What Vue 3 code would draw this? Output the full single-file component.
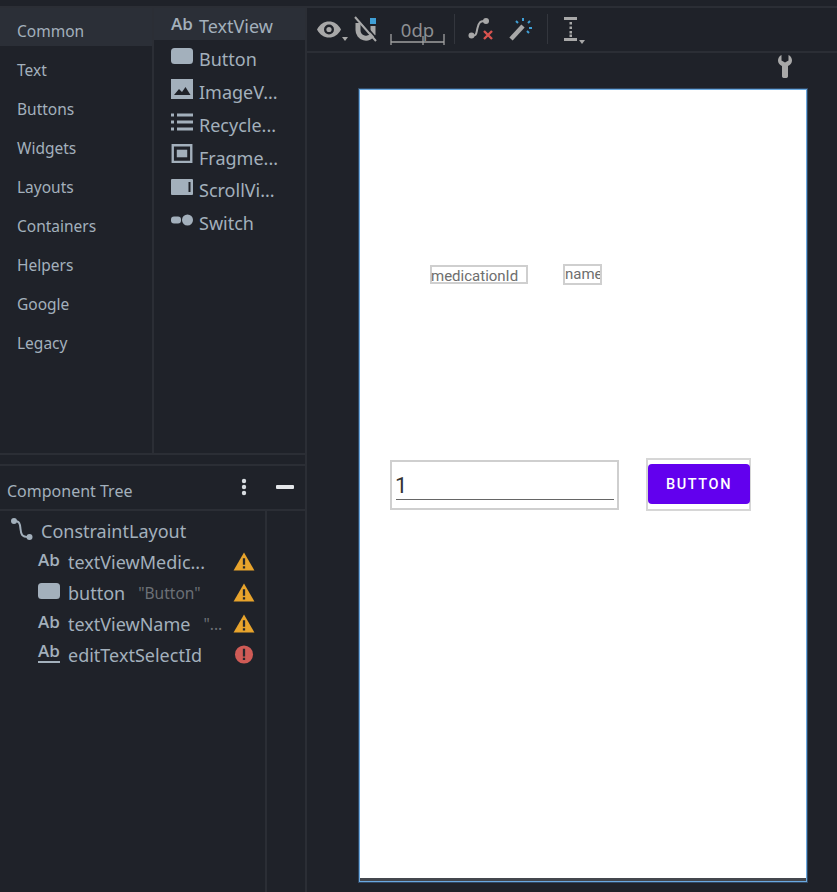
<template>
  <div class="studio">
    <aside class="side">
      <section class="palette">
        <ul class="categories">
          <li
            v-for="(name, i) in categories"
            :key="name"
            class="categories__item"
            :class="{ 'categories__item--active': i === 0 }"
          >
            {{ name }}
          </li>
        </ul>
        <ul class="widgets">
          <li class="widgets__item widgets__item--active">
            <span class="ab">Ab</span><span class="widgets__label">TextView</span>
          </li>
          <li class="widgets__item">
            <svg class="ico" viewBox="0 0 22 16"><rect x="0" y="0" width="22" height="16" rx="3.5" fill="#a3b0bc" /></svg>
            <span class="widgets__label">Button</span>
          </li>
          <li class="widgets__item">
            <svg class="ico" viewBox="0 0 22 20">
              <path fill="#a3b0bc" d="M0 0h22v20H0z" />
              <path fill="#1f2229" d="M3 16l5-6 3 3 3.500-5 5 8z" />
            </svg>
            <span class="widgets__label">ImageV...</span>
          </li>
          <li class="widgets__item">
            <svg class="ico" viewBox="0 0 22 17">
              <path fill="#a3b0bc" d="M0 0h3v3H0zM6 0h16v3H6zM0 7h3v3H0zM6 7h16v3H6zM0 14h3v3H0zM6 14h16v3H6z" />
            </svg>
            <span class="widgets__label">Recycle...</span>
          </li>
          <li class="widgets__item">
            <svg class="ico ico--fragment" viewBox="0 0 22 20">
              <path fill="#a3b0bc" fill-rule="evenodd" d="M0 0h22v20H0zM2.500 2.500v15h17v-15z" />
              <path fill="#a3b0bc" d="M5.500 6h11v8h-11z" />
            </svg>
            <span class="widgets__label">Fragme...</span>
          </li>
          <li class="widgets__item">
            <svg class="ico" viewBox="0 0 22 16">
              <path fill="#a3b0bc" d="M1 0h20a1 1 0 0 1 1 1v14a1 1 0 0 1-1 1H1a1 1 0 0 1-1-1V1a1 1 0 0 1 1-1z" />
              <path fill="#1f2229" d="M17.500 3h2v10h-2z" />
            </svg>
            <span class="widgets__label">ScrollVi...</span>
          </li>
          <li class="widgets__item">
            <svg class="ico" viewBox="0 0 22 13">
              <rect x="0" y="3" width="10" height="7" rx="3" fill="#a3b0bc" />
              <circle cx="16.500" cy="6.500" r="5.500" fill="#a3b0bc" />
            </svg>
            <span class="widgets__label">Switch</span>
          </li>
        </ul>
      </section>

      <div class="strip"></div>

      <header class="tree-head">
        <span>Component Tree</span>
        <div class="tree-head__tools">
          <svg class="dots" viewBox="0 0 6 18">
            <circle cx="3" cy="3" r="2.200" fill="#d8dce0" />
            <circle cx="3" cy="9" r="2.200" fill="#d8dce0" />
            <circle cx="3" cy="15" r="2.200" fill="#d8dce0" />
          </svg>
          <span class="minus"></span>
        </div>
      </header>

      <div class="tree">
        <ul class="tree__list">
          <li class="tree__row tree__row--root">
            <svg class="tree__root-ico" viewBox="0 0 24 24">
              <path d="M4 4c6 0 6 3 6.500 8s1 8 8 8" fill="none" stroke="#a3b0bc" stroke-width="2" />
              <circle cx="4" cy="4" r="3" fill="#a3b0bc" />
              <circle cx="19.500" cy="20" r="3" fill="#a3b0bc" />
            </svg>
            <span>ConstraintLayout</span>
          </li>
          <li v-for="row in treeRows" :key="row.name" class="tree__row tree__row--child">
            <span v-if="row.icon === 'ab'" class="ab ab--tree">Ab</span>
            <svg v-else-if="row.icon === 'button'" class="ico ico--tree" viewBox="0 0 22 16">
              <rect x="0" y="0" width="22" height="16" rx="3.500" fill="#a3b0bc" />
            </svg>
            <span v-else class="ab ab--tree ab--edit">Ab</span>
            <span class="tree__name">{{ row.name }}</span>
            <span v-if="row.hint" class="tree__hint" :style="{ marginLeft: row.hintGap + 'px' }">{{ row.hint }}</span>
            <svg v-if="row.level === 'warn'" class="tree__badge" viewBox="0 0 22 20">
              <path d="M11 0.500L22 19.500H0z" fill="#e8a42c" />
              <path d="M9.800 6.500h2.400v7h-2.400zM9.800 15h2.400v2.400h-2.400z" fill="#26282c" />
            </svg>
            <svg v-else class="tree__badge" viewBox="0 0 20 20">
              <circle cx="10" cy="10" r="9.500" fill="#cf5b56" />
              <path d="M8.800 4h2.400v8H8.800zM8.800 13.500h2.400v2.400H8.800z" fill="#26282c" />
            </svg>
          </li>
        </ul>
      </div>
    </aside>

    <main class="editor">
      <div class="toolbar">
        <div class="toolbar__icon">
          <svg width="24" height="17" viewBox="0 0 24 17">
            <path fill="#a8a8a8" fill-rule="evenodd" d="M0 8.500C3 3 7 .5 12 .5s9 2.500 12 8c-3 5.500-7 8-12 8s-9-2.500-12-8zM12 3.500a5 5 0 1 0 0 10 5 5 0 0 0 0-10z" />
            <circle cx="12" cy="8.500" r="2.600" fill="#a8a8a8" />
          </svg>
          <i class="caret"></i>
        </div>
        <svg class="toolbar__magnet" width="24" height="26" viewBox="0 0 24 26">
          <path d="M4 7v7a8 8 0 0 0 15 4V10" fill="none" stroke="#a8a8a8" stroke-width="5" />
          <rect x="16" y="2" width="6" height="6" fill="#3f9fd6" />
          <path d="M1 1l21 24" stroke="#a8a8a8" stroke-width="2" />
          <path d="M4 1L24 24" stroke="#1f2229" stroke-width="1.500" />
        </svg>
        <div class="margin-box">
          <span>0dp</span>
          <svg class="margin-box__rule" width="55" height="11" viewBox="0 0 55 11">
            <path d="M1 0v11M54 0v11M1 8h53M33 2v9" fill="none" stroke="#a0a0a0" stroke-width="1.300" />
          </svg>
        </div>
        <i class="toolbar__sep"></i>
        <svg class="toolbar__link" width="26" height="24" viewBox="0 0 26 24">
          <path d="M3 19c6 0 5-2 6.500-8S12 4 18 4" fill="none" stroke="#a8a8a8" stroke-width="2" />
          <circle cx="3.500" cy="18.500" r="3" fill="#a8a8a8" />
          <circle cx="18" cy="4" r="3" fill="#a8a8a8" />
          <path d="M16 14l8 8M24 14l-8 8" stroke="#d9534f" stroke-width="2.400" />
        </svg>
        <svg class="toolbar__wand" width="24" height="24" viewBox="0 0 24 24">
          <path d="M2 22L14 9" stroke="#a8a8a8" stroke-width="4.500" />
          <path d="M14 1v3M21 4l-2 2M23 11h-3M7 4l2 2M20 16l-2-2" stroke="#3f9fd6" stroke-width="2" />
        </svg>
        <i class="toolbar__sep toolbar__sep--second"></i>
        <div class="toolbar__icon toolbar__icon--guides">
          <svg width="14" height="24" viewBox="0 0 14 24">
            <path fill="#a8a8a8" d="M0 0h13v3H0zM0 21h13v3H0zM5.500 5h2.500v2.500H5.500zM5.500 9.500h2.500V12H5.500zM5.500 14h2.500v2.500H5.500zM5.500 17.500h2.500V20H5.500z" />
          </svg>
          <i class="caret"></i>
        </div>
      </div>

      <div class="canvas">
        <svg class="wrench" width="14" height="23" viewBox="0 0 14 23">
          <path fill="#a8a8a8" d="M3.500 0v5.500L7 7.500l3.500-2V0C13 1 14 3.500 14 5.500c0 2.500-1.500 4.500-4 5.500v10.500a2 2 0 0 1-1.500 1.500h-3A2 2 0 0 1 4 21.500V11C1.500 10 0 8 0 5.500 0 3.500 1 1 3.500 0z" />
        </svg>
        <div class="surface">
          <div class="view view--medication">medicationId</div>
          <div class="view view--name">name</div>
          <div class="view view--edit">
            <div class="view__input">1</div>
          </div>
          <div class="view view--button">
            <div class="view__button">BUTTON</div>
          </div>
        </div>
      </div>
    </main>
  </div>
</template>

<script setup>
const categories = [
  "Common",
  "Text",
  "Buttons",
  "Widgets",
  "Layouts",
  "Containers",
  "Helpers",
  "Google",
  "Legacy"
]

const treeRows = [
  { name: "textViewMedic...", icon: "ab", level: "warn" },
  { name: "button", icon: "button", hint: "\"Button\"", hintGap: 13, level: "warn" },
  { name: "textViewName", icon: "ab", hint: "\"...", hintGap: 13, level: "warn" },
  { name: "editTextSelectId", icon: "edit", level: "error" }
]
</script>

<style>
html,
body {
  margin: 0;
  background: #1f2229;
}
</style>

<style scoped>
.studio {
  display: flex;
  width: 837px;
  height: 892px;
  overflow: hidden;
  background: #1f2229;
  color: #a3b0bc;
  font-family: "Noto Sans", "Open Sans", sans-serif;
  box-sizing: border-box;
  padding-top: 7px;
  position: relative;
}
.studio::before {
  content: "";
  position: absolute;
  top: 6px;
  left: 0;
  right: 0;
  height: 2px;
  background: #2b2e35;
}
ul {
  list-style: none;
  margin: 0;
  padding: 0;
}

.side {
  width: 307px;
  flex: none;
  display: flex;
  flex-direction: column;
  border-right: 2px solid #2b2e35;
  box-sizing: border-box;
}
.palette {
  display: flex;
  height: 446px;
  flex: none;
}
.categories {
  width: 152px;
  flex: none;
  border-right: 2px solid #2b2e35;
}
.categories__item {
  height: 39px;
  line-height: 48px;
  padding-left: 17px;
  font-size: 15.5px;
}
.categories__item--active {
  background: #2b2f37;
}
.widgets {
  flex: 1;
}
.widgets__item {
  height: 32.8px;
  display: flex;
  align-items: center;
  gap: 6px;
  padding-left: 17px;
  font-size: 18px;
  line-height: 1;
}
.widgets__item--active {
  background: #2b2f37;
}
.widgets__label {
  position: relative;
  top: 3px;
}
.ab {
  width: 22px;
  font-size: 17px;
  font-weight: 600;
  color: #a3b0bc;
  font-family: "Open Sans", sans-serif;
  position: relative;
  top: 0;
}
.ab--tree {
  width: 22px;
  flex: none;
  top: -2px;
}
.ab--edit {
  border-bottom: 2px solid #a3b0bc;
  line-height: 18px;
  height: 19px;
}
.ico {
  width: 22px;
  height: 20px;
  flex: none;
}
.ico--fragment {
  height: 19px;
  position: relative;
  top: -1px;
}
.ico--tree {
  height: 16px;
  position: relative;
  top: -2px;
}

.strip {
  height: 13px;
  flex: none;
  box-sizing: border-box;
  border-top: 2px solid #2b2e35;
  border-bottom: 2px solid #2b2e35;
}
.tree-head {
  height: 45px;
  flex: none;
  box-sizing: border-box;
  display: flex;
  align-items: center;
  justify-content: space-between;
  padding: 7px 11px 0 7px;
  border-bottom: 2px solid #2b2e35;
  font-size: 16px;
}
.tree-head__tools {
  display: flex;
  align-items: center;
  gap: 29px;
  position: relative;
  top: -4px;
}
.dots {
  width: 6px;
  height: 18px;
}
.minus {
  width: 18px;
  height: 4px;
  border-radius: 1px;
  background: #e4e6e9;
}
.tree {
  flex: 1;
  width: 267px;
  box-sizing: border-box;
  border-right: 2px solid #2b2e35;
}
.tree__list {
  padding-top: 4px;
}
.tree__row {
  position: relative;
  height: 31px;
  display: flex;
  align-items: center;
  white-space: nowrap;
  font-size: 18px;
}
.tree__row--root {
  padding-left: 10px;
  gap: 7px;
}
.tree__root-ico {
  width: 24px;
  height: 24px;
  position: relative;
  top: -2px;
}
.tree__row--child {
  padding-left: 38px;
}
.tree__name {
  margin-left: 8px;
}
.tree__hint {
  font-size: 15.5px;
  color: #6c7076;
}
.tree__badge {
  position: absolute;
  left: 233px;
  top: 6px;
  width: 22px;
  height: 19px;
}

.editor {
  flex: 1;
  min-width: 0;
  display: flex;
  flex-direction: column;
}
.toolbar {
  height: 46px;
  flex: none;
  box-sizing: border-box;
  border-bottom: 2px solid #2b2e35;
  display: flex;
  align-items: center;
  padding-left: 10px;
}
.toolbar__icon {
  position: relative;
  display: flex;
  align-items: center;
}
.caret {
  position: absolute;
  right: -7px;
  bottom: -3px;
  border-left: 3.5px solid transparent;
  border-right: 3.5px solid transparent;
  border-top: 4px solid #a8a8a8;
}
.toolbar__magnet {
  margin-left: 13px;
}
.margin-box {
  position: relative;
  width: 55px;
  height: 30px;
  margin-left: 12px;
  text-align: center;
  font-size: 18.5px;
  line-height: 32px;
  color: #8d8f92;
}
.margin-box__rule {
  position: absolute;
  left: 0;
  bottom: -1px;
}
.toolbar__sep {
  width: 1px;
  height: 30px;
  margin-left: 9px;
  background: #33363d;
}
.toolbar__link {
  margin-left: 13px;
}
.toolbar__wand {
  margin-left: 15px;
}
.toolbar__sep--second {
  margin-left: 14px;
}
.toolbar__icon--guides {
  margin-left: 16px;
}

.canvas {
  flex: 1;
  position: relative;
}
.wrench {
  position: absolute;
  left: 471px;
  top: 2px;
}
.surface {
  position: absolute;
  left: 52px;
  top: 36px;
  width: 448px;
  height: 793px;
  box-sizing: border-box;
  background: #fff;
  border: 1px solid #6aa9e0;
  box-shadow: inset 0 -3px 0 #44474d, 0 0 0 1px rgba(70, 120, 170, 0.45);
  font-family: Roboto, sans-serif;
}
.view {
  position: absolute;
  box-sizing: border-box;
  border: 2px solid #cfcfcf;
  color: #6e6e6e;
}
.view--medication {
  left: 70px;
  top: 175px;
  width: 98px;
  height: 19px;
  font-size: 15px;
  line-height: 18px;
  white-space: nowrap;
  text-indent: -1px;
}
.view--name {
  left: 203px;
  top: 174px;
  width: 39px;
  height: 21px;
  overflow: hidden;
  font-size: 15px;
  line-height: 17px;
}
.view--edit {
  left: 30px;
  top: 370px;
  width: 229px;
  height: 50px;
  padding: 3px 3px 3px 4px;
}
.view__input {
  height: 34px;
  border-bottom: 1.5px solid #666;
  color: #333;
  font-size: 22px;
  line-height: 41px;
  text-indent: -1px;
}
.view--button {
  left: 286px;
  top: 368px;
  width: 105px;
  height: 53px;
  padding-top: 4px;
  border-color: #d6d6d6;
}
.view__button {
  width: 102px;
  height: 40px;
  border-radius: 4px;
  background: #6200ee;
  color: #fff;
  font-size: 14.5px;
  font-weight: 500;
  letter-spacing: 1.6px;
  line-height: 42px;
  text-align: center;
}
</style>
